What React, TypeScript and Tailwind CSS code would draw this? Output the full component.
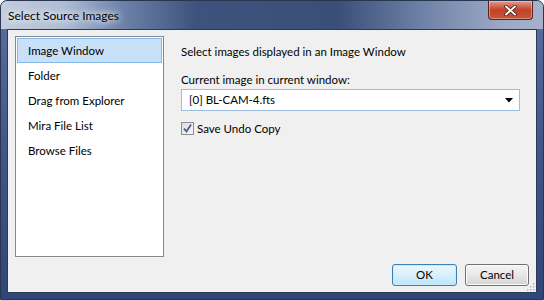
import React from 'react';

const items = ['Image Window', 'Folder', 'Drag from Explorer', 'Mira File List', 'Browse Files'];

function CheckBox() {
  return (
    <span className="flex h-[13px] w-[13px] items-center justify-center border border-[#8f8f8f] bg-gradient-to-br from-[#dcdcdc] to-[#f8f8f8]">
      <svg width="11" height="11" viewBox="0 0 11 11">
        <path d="M2 5.5 L4.5 8.5 L9 1.5" fill="none" stroke="#4a5e8c" strokeWidth="1.8" />
      </svg>
    </span>
  );
}

export default function App() {
  return (
    <div
      className="relative h-[300px] w-[544px] overflow-hidden rounded-t-[7px] border border-[#2a3550] bg-gradient-to-b from-[#5b70a0] via-[#3f5686] to-[#2f4678] text-[11.5px] text-black"
      style={{ fontFamily: 'Lato, "Noto Sans", sans-serif' }}
    >
      {/* Title bar */}
      <div className="flex h-[28px] items-start bg-[linear-gradient(90deg,#c2cddd_0%,#aebcd3_12%,#6f84aa_22%,#3d537d_36%,#3a4f78_62%,#6f82a7_78%,#9aa8c4_92%,#a7b3cb_100%)]">
        <span className="ml-[7px] mt-[6px] text-[12px] [text-shadow:0_0_6px_#ffffff,0_0_10px_#ffffff]">Select Source Images</span>
        <div className="ml-auto mr-[10px] flex h-[19px] w-[45px] items-center justify-center rounded-b-[4px] border border-t-0 border-[#5b2020] bg-gradient-to-b from-[#e09a8a] via-[#c24028] to-[#c55838] shadow-[inset_0_0_0_1px_rgba(255,255,255,0.35)]">
          <svg width="13" height="11" viewBox="0 0 13 11">
            <path d="M2 1.5 L11 9.5 M11 1.5 L2 9.5" stroke="#3a1410" strokeWidth="3.4" strokeLinecap="round" />
            <path d="M2 1.5 L11 9.5 M11 1.5 L2 9.5" stroke="#ffffff" strokeWidth="2" strokeLinecap="round" />
          </svg>
        </div>
      </div>

      {/* Client area */}
      <div className="relative mx-[6px] flex h-[264px] flex-col border border-[#2c3a58] bg-[#f0f0f0]">
        <div className="flex px-[7px] pt-[6px]">
          <div className="flex h-[221px] w-[149px] flex-col border border-[#828790] bg-white p-[1px]">
            {items.map((it, i) => (
              <div
                key={it}
                className={`flex h-[25px] items-center pl-[10px] ${
                  i === 0 ? 'border border-[#84b9ec] bg-[#c8e1f9]' : 'border border-transparent'
                }`}
              >
                {it}
              </div>
            ))}
          </div>

          <div className="ml-[17px] flex w-[339px] flex-col">
            <div className="mt-[8px] h-[16px] leading-[16px]">Select images displayed in an Image Window</div>
            <div className="mt-[12px] h-[16px] leading-[16px]">Current image in current window:</div>
            <div className="mt-[1px] flex h-[22px] items-center border border-[#9fbde0] bg-white pl-[7px] pr-[6px]">
              <span>[0] BL-CAM-4.fts</span>
              <svg className="ml-auto" width="8" height="5" viewBox="0 0 8 5">
                <path d="M0 0 H8 L4 4.5 Z" fill="#000" />
              </svg>
            </div>
            <div className="mt-[11px] flex h-[13px] items-center gap-[3px]">
              <CheckBox />
              <span>Save Undo Copy</span>
            </div>
          </div>
        </div>

        <div className="mt-[7px] flex justify-end gap-[8px] pr-[7px]">
          <button className="h-[22px] w-[65px] rounded-[3px] border border-[#3c7fb1] bg-gradient-to-b from-[#eaf6fd] via-[#d9f0fc] to-[#bde4f9] shadow-[inset_0_0_0_1px_#c8ecff]">
            OK
          </button>
          <button className="h-[22px] w-[64px] rounded-[3px] border border-[#707070] bg-gradient-to-b from-[#f4f4f4] via-[#e8e8e8] to-[#d4d4d4] shadow-[inset_0_0_0_1px_#fcfcfc]">
            Cancel
          </button>
        </div>

        {/* size grip */}
        <svg className="absolute bottom-[1px] right-[1px]" width="10" height="10" viewBox="0 0 10 10">
          {[
            [8, 2], [8, 5], [8, 8], [5, 5], [5, 8], [2, 8],
          ].map(([x, y]) => (
            <rect key={`${x}-${y}`} x={x} y={y} width="1.5" height="1.5" fill="#b8b8b8" />
          ))}
        </svg>
      </div>
    </div>
  );
}
